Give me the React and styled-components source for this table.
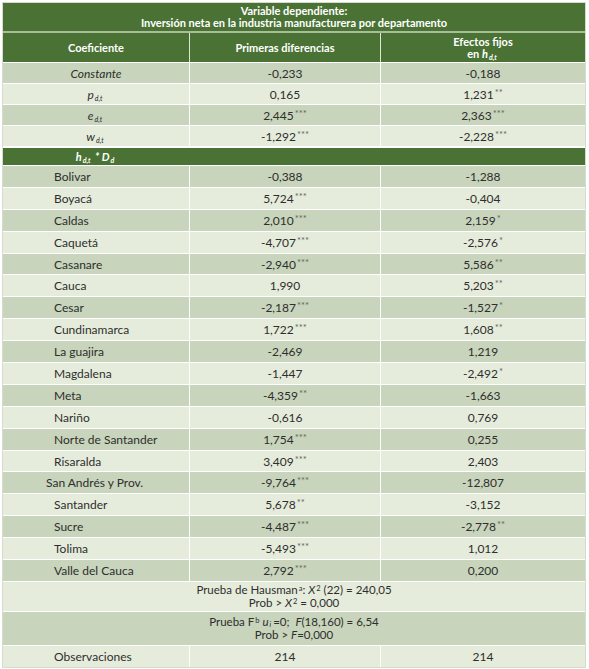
import React from "react";
import styled, { createGlobalStyle } from "styled-components";

const GlobalStyle = createGlobalStyle`
  body {
    margin: 0;
    background: #fff;
    font-family: Lato, "Open Sans", sans-serif;
    color: #2e2e2e;
  }
`;

const Page = styled.div`
  padding: 2px 0 0 2px;
`;

const Table = styled.div`
  width: 584px;
  border: 1px solid #d5dccb;
  box-sizing: border-box;
  display: flex;
  flex-direction: column;
`;

const TitleRow = styled.div`
  height: 28px;
  background: #4a7234;
  color: #fff;
  font-weight: 700;
  font-size: 11px;
  line-height: 12px;
  display: flex;
  flex-direction: column;
  align-items: center;
  justify-content: center;
`;

const HeaderRow = styled.div`
  height: 29px;
  border-top: 2px solid #a9bd99;
  background: #4a7234;
  color: #fff;
  font-weight: 700;
  font-size: 11px;
  line-height: 12px;
  display: grid;
  grid-template-columns: 186px 191px 1fr;
`;

const HeadCell = styled.div`
  display: flex;
  flex-direction: column;
  align-items: center;
  justify-content: center;
  border-left: ${({ first }) => (first ? "none" : "1px solid #dfe6d6")};
`;

const Row = styled.div`
  height: ${({ h }) => h}px;
  box-sizing: border-box;
  border-top: 1px solid #fff;
  background: ${({ dark }) => (dark ? "#c8d4bb" : "#e6ecdc")};
  font-size: 12px;
  display: grid;
  grid-template-columns: 186px 191px 1fr;
`;

const Cell = styled.div`
  display: flex;
  align-items: center;
  justify-content: ${({ left }) => (left ? "flex-start" : "center")};
  padding-left: ${({ left, indent }) => (left ? `${indent ?? 51}px` : "0")};
  border-left: ${({ first }) => (first ? "none" : "1px solid #fff")};
  font-style: ${({ italic }) => (italic ? "italic" : "normal")};
`;

const GroupRow = styled.div`
  height: 17px;
  border-top: 2px solid #fff;
  background: #4a7234;
  color: #fff;
  font-weight: 700;
  font-style: italic;
  font-size: 11px;
  display: grid;
  grid-template-columns: 186px 1fr;
`;

const GroupLabel = styled.div`
  display: flex;
  align-items: center;
  justify-content: center;
`;

const SpanRow = styled.div`
  height: ${({ h }) => h}px;
  box-sizing: border-box;
  border-top: 1px solid #fff;
  background: ${({ dark }) => (dark ? "#c8d4bb" : "#e6ecdc")};
  font-size: 11.5px;
  line-height: 13px;
  display: flex;
  flex-direction: column;
  align-items: center;
  justify-content: center;
`;

const Sub = styled.sub`
  font-size: 7px;
  font-style: italic;
  vertical-align: ${({ shallow }) => (shallow ? "-1px" : "-2px")};
  line-height: 0;
  margin: 0 2px 0 1px;
`;

const Sup = styled.sup`
  font-size: 7.5px;
  vertical-align: 3px;
  line-height: 0;
  margin-left: 1px;
`;

const Stars = styled.span`
  font-size: 9.5px;
  color: #666;
  position: relative;
  top: -2px;
  margin-left: 1px;
`;

const Var = styled.i`
  font-style: italic;
`;

const Value = ({ v }) => {
  const num = v.replace(/\*+$/, "");
  const stars = (v.match(/\*+$/) || [""])[0];
  return (
    <>
      {num}
      {stars && <Stars>{stars}</Stars>}
    </>
  );
};

const topRows = [
  { label: "Constante", a: "-0,233", b: "-0,188" },
  { sym: "p", a: "0,165", b: "1,231**" },
  { sym: "e", a: "2,445***", b: "2,363***" },
  { sym: "w", a: "-1,292***", b: "-2,228***" },
];

const departments = [
  ["Bolivar", "-0,388", "-1,288"],
  ["Boyacá", "5,724***", "-0,404"],
  ["Caldas", "2,010***", "2,159*"],
  ["Caquetá", "-4,707***", "-2,576*"],
  ["Casanare", "-2,940***", "5,586**"],
  ["Cauca", "1,990", "5,203**"],
  ["Cesar", "-2,187***", "-1,527*"],
  ["Cundinamarca", "1,722***", "1,608**"],
  ["La guajira", "-2,469", "1,219"],
  ["Magdalena", "-1,447", "-2,492*"],
  ["Meta", "-4,359**", "-1,663"],
  ["Nariño", "-0,616", "0,769"],
  ["Norte de Santander", "1,754***", "0,255"],
  ["Risaralda", "3,409***", "2,403"],
  ["San Andrés y Prov.", "-9,764***", "-12,807", 43],
  ["Santander", "5,678**", "-3,152"],
  ["Sucre", "-4,487***", "-2,778**"],
  ["Tolima", "-5,493***", "1,012"],
  ["Valle del Cauca", "2,792***", "0,200"],
];

export default function App() {
  return (
    <Page>
      <GlobalStyle />
      <Table>
        <TitleRow>
          <span>Variable dependiente:</span>
          <span>Inversión neta en la industria manufacturera por departamento</span>
        </TitleRow>
        <HeaderRow>
          <HeadCell first>Coeficiente</HeadCell>
          <HeadCell>Primeras diferencias</HeadCell>
          <HeadCell>
            <span>Efectos fijos</span>
            <span>
              en <Var>h</Var>
              <Sub>d,t</Sub>
            </span>
          </HeadCell>
        </HeaderRow>

        {topRows.map((r, i) => (
          <Row key={i} h={21} dark={i % 2 === 0}>
            <Cell first italic>
              {r.label ? (
                r.label
              ) : (
                <span>
                  {r.sym}
                  <Sub>d,t</Sub>
                </span>
              )}
            </Cell>
            <Cell>
              <Value v={r.a} />
            </Cell>
            <Cell>
              <Value v={r.b} />
            </Cell>
          </Row>
        ))}

        <GroupRow>
          <GroupLabel>
            <span>
              h<Sub>d,t</Sub> * D<Sub>d</Sub>
            </span>
          </GroupLabel>
        </GroupRow>

        {departments.map(([name, a, b, indent], i) => (
          <Row key={name} h={21.9} dark={i % 2 === 0}>
            <Cell first left indent={indent}>
              {name}
            </Cell>
            <Cell>
              <Value v={a} />
            </Cell>
            <Cell>
              <Value v={b} />
            </Cell>
          </Row>
        ))}

        <SpanRow h={30}>
          <span>
            Prueba de Hausman<Sup>a</Sup>: <Var>X</Var>
            <Sup>2</Sup> (22) = 240,05
          </span>
          <span>
            Prob &gt; <Var>X</Var>
            <Sup>2</Sup> = 0,000
          </span>
        </SpanRow>
        <SpanRow h={34} dark>
          <span>
            Prueba F<Sup>b</Sup> <Var>u</Var>
            <Sub shallow>i</Sub>=0;&nbsp; <Var>F</Var>(18,160) = 6,54
          </span>
          <span>
            Prob &gt; <Var>F</Var>=0,000
          </span>
        </SpanRow>
        <Row h={22}>
          <Cell first left>
            Observaciones
          </Cell>
          <Cell>214</Cell>
          <Cell>214</Cell>
        </Row>
      </Table>
    </Page>
  );
}
